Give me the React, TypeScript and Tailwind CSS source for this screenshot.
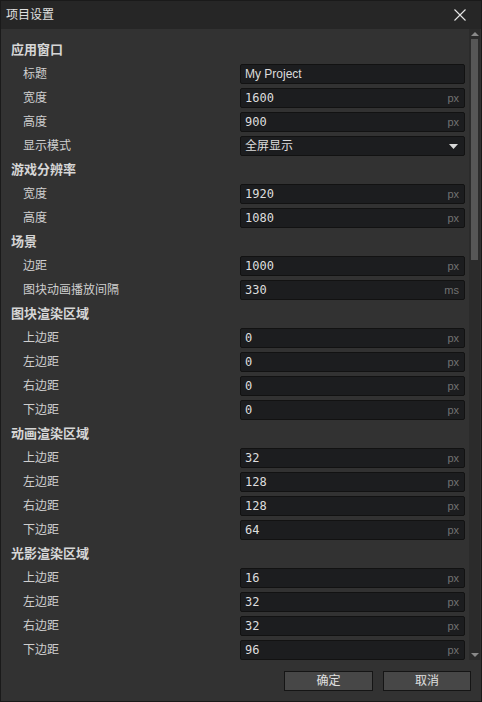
import React from "react";

type Row =
  | { kind: "h"; label: string }
  | { kind: "text"; label: string; value: string }
  | { kind: "num"; label: string; value: string; unit: string }
  | { kind: "select"; label: string; value: string };

const rows: Row[] = [
  { kind: "h", label: "应用窗口" },
  { kind: "text", label: "标题", value: "My Project" },
  { kind: "num", label: "宽度", value: "1600", unit: "px" },
  { kind: "num", label: "高度", value: "900", unit: "px" },
  { kind: "select", label: "显示模式", value: "全屏显示" },
  { kind: "h", label: "游戏分辨率" },
  { kind: "num", label: "宽度", value: "1920", unit: "px" },
  { kind: "num", label: "高度", value: "1080", unit: "px" },
  { kind: "h", label: "场景" },
  { kind: "num", label: "边距", value: "1000", unit: "px" },
  { kind: "num", label: "图块动画播放间隔", value: "330", unit: "ms" },
  { kind: "h", label: "图块渲染区域" },
  { kind: "num", label: "上边距", value: "0", unit: "px" },
  { kind: "num", label: "左边距", value: "0", unit: "px" },
  { kind: "num", label: "右边距", value: "0", unit: "px" },
  { kind: "num", label: "下边距", value: "0", unit: "px" },
  { kind: "h", label: "动画渲染区域" },
  { kind: "num", label: "上边距", value: "32", unit: "px" },
  { kind: "num", label: "左边距", value: "128", unit: "px" },
  { kind: "num", label: "右边距", value: "128", unit: "px" },
  { kind: "num", label: "下边距", value: "64", unit: "px" },
  { kind: "h", label: "光影渲染区域" },
  { kind: "num", label: "上边距", value: "16", unit: "px" },
  { kind: "num", label: "左边距", value: "32", unit: "px" },
  { kind: "num", label: "右边距", value: "32", unit: "px" },
  { kind: "num", label: "下边距", value: "96", unit: "px" },
];

const cjk = "font-['Liberation_Sans','Noto_Sans_CJK_SC',sans-serif]";
const mono = "font-['DejaVu_Sans_Mono','Noto_Sans_CJK_SC',monospace]";

function Field({ row }: { row: Row }) {
  if (row.kind === "h") return null;
  const box =
    "w-[225px] h-[20px] bg-[#1c1d1f] border border-[#121212] rounded-[2px] flex items-center pl-[4px] pr-[5px]";
  if (row.kind === "text")
    return (
      <div className={box}>
        <span className={`${cjk} text-[12px] text-[#dcdcdc]`}>{row.value}</span>
      </div>
    );
  if (row.kind === "select")
    return (
      <div className={`${box} justify-between`}>
        <span className={`${cjk} text-[12px] text-[#dcdcdc]`}>{row.value}</span>
        <svg width="9" height="5" viewBox="0 0 9 5" className="mr-[1px]">
          <path d="M0 0 L9 0 L4.5 5 Z" fill="#d8d8d8" />
        </svg>
      </div>
    );
  return (
    <div className={`${box} justify-between`}>
      <span className={`${mono} text-[12px] text-[#dedede]`}>{row.value}</span>
      <span className={`${cjk} text-[11px] text-[#727272]`}>{row.unit}</span>
    </div>
  );
}

export default function App() {
  return (
    <div className={`w-[482px] h-[702px] bg-[#323232] border border-[#1a1a1a] flex flex-col ${cjk} overflow-hidden`}>
      <div className="h-[28px] bg-[#262626] flex items-center justify-between pl-[5px] pr-[15px] shrink-0">
        <span className="text-[12px] text-[#e0e0e0]">项目设置</span>
        <svg width="12" height="12" viewBox="0 0 12 12">
          <path d="M0.5 0.5 L11.5 11.5 M11.5 0.5 L0.5 11.5" stroke="#e6e6e6" strokeWidth="1.1" />
        </svg>
      </div>
      <div className="h-[631px] flex shrink-0">
        <div className="flex-1 overflow-hidden pt-[9px] pl-[10px]">
          {rows.map((r, i) =>
            r.kind === "h" ? (
              <div key={i} className="h-[24px] flex items-center">
                <span className="text-[13px] font-bold text-[#d6d6d6]">{r.label}</span>
              </div>
            ) : (
              <div key={i} className="h-[24px] flex items-center">
                <span className="w-[229px] pl-[12px] text-[12px] text-[#cfcfcf]">{r.label}</span>
                <Field row={r} />
              </div>
            )
          )}
        </div>
        <div className="w-[11px] mr-[1px] bg-[#2b2b2b] flex flex-col items-center pt-[3px] pb-[3px]">
          <svg width="8" height="4" viewBox="0 0 8 4">
            <path d="M0 4 L8 4 L4 0 Z" fill="#8a8a8a" />
          </svg>
          <div className="w-[7px] h-[221px] bg-[#565656] mt-[3px]" />
          <div className="flex-1" />
          <svg width="8" height="4" viewBox="0 0 8 4">
            <path d="M0 0 L8 0 L4 4 Z" fill="#8a8a8a" />
          </svg>
        </div>
      </div>
      <div className="flex-1 flex justify-end items-start pt-[11px] pr-[10px] gap-[10px]">
        <button className="w-[89px] h-[20px] bg-[#474747] border border-[#151515] text-[12px] text-[#e0e0e0] flex items-center justify-center">
          确定
        </button>
        <button className="w-[88px] h-[20px] bg-[#474747] border border-[#151515] text-[12px] text-[#e0e0e0] flex items-center justify-center">
          取消
        </button>
      </div>
    </div>
  );
}
